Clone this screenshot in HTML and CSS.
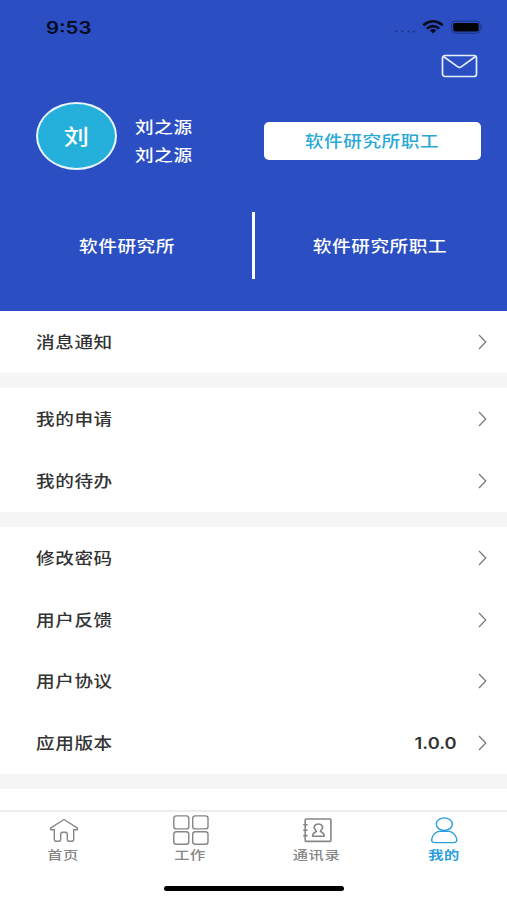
FILE: index.html
```html
<!DOCTYPE html>
<html lang="zh-CN">
<head>
<meta charset="utf-8">
<title>我的</title>
<link rel="stylesheet" href="styles.css">
</head>
<body>
<div class="screen">
  <header class="hero">
    <div class="status">
      <span class="time">9:53</span>
      <svg class="status-icons" width="92" height="20" viewBox="0 0 92 20">
        <g fill="#1b3083"><circle cx="3.5" cy="13.5" r="1"/><circle cx="9.5" cy="13.5" r="1"/><circle cx="15.5" cy="13.5" r="1"/><circle cx="21" cy="13.5" r="1"/></g>
        <g transform="translate(-2 0)"><g fill="none" stroke="#050a1c" stroke-width="2.5"><path d="M32.3 7.2Q42 -0.6 51.7 7.2"/><path d="M35.8 10.6Q42 5.6 48.2 10.6"/></g>
        <path d="M38.7 12.4Q42 9.8 45.3 12.4L42 15.4Z" fill="#050a1c"/></g>
        <g transform="translate(-2 0)"><rect x="60.7" y="3.2" width="28.5" height="12" rx="3.5" fill="none" stroke="#1c3283" stroke-width="1"/>
        <rect x="62.3" y="4.9" width="25.4" height="8.7" rx="1.8" fill="#000"/>
        <path d="M90.5 7.3q2 2 0 4z" fill="#1c3283"/></g>
      </svg>
    </div>
    <div class="mail-row">
      <svg width="37" height="24" viewBox="0 0 37 24" fill="none" stroke="#e6edff" stroke-width="1.7" stroke-linejoin="round"><rect x="1.5" y="1.5" width="34" height="21" rx="2.5"/><path d="M2.5 2.5L16.5 12.6Q18.5 14 20.5 12.6L34.5 2.5"/></svg>
    </div>
    <div class="profile">
      <div class="avatar"><span class="wide">刘</span></div>
      <div class="names"><span class="wide">刘之源</span><span class="wide">刘之源</span></div>
      <div class="role"><span class="wide">软件研究所职工</span></div>
    </div>
    <div class="orgs">
      <div class="org"><span class="wide">软件研究所</span></div>
      <div class="divider"></div>
      <div class="org"><span class="wide">软件研究所职工</span></div>
    </div>
  </header>

  <main class="menu">
    <section class="group">
      <div class="row"><span class="wide">消息通知</span><svg class="chevron" viewBox="0 0 9 16"><path d="M1 1L7.8 8L1 15"/></svg></div>
    </section>
    <section class="group">
      <div class="row"><span class="wide">我的申请</span><svg class="chevron" viewBox="0 0 9 16"><path d="M1 1L7.8 8L1 15"/></svg></div>
      <div class="row"><span class="wide">我的待办</span><svg class="chevron" viewBox="0 0 9 16"><path d="M1 1L7.8 8L1 15"/></svg></div>
    </section>
    <section class="group">
      <div class="row"><span class="wide">修改密码</span><svg class="chevron" viewBox="0 0 9 16"><path d="M1 1L7.8 8L1 15"/></svg></div>
      <div class="row"><span class="wide">用户反馈</span><svg class="chevron" viewBox="0 0 9 16"><path d="M1 1L7.8 8L1 15"/></svg></div>
      <div class="row"><span class="wide">用户协议</span><svg class="chevron" viewBox="0 0 9 16"><path d="M1 1L7.8 8L1 15"/></svg></div>
      <div class="row"><span class="wide">应用版本</span><span class="version">1.0.0</span><svg class="chevron" viewBox="0 0 9 16"><path d="M1 1L7.8 8L1 15"/></svg></div>
    </section>
    <section class="group rest"></section>
  </main>

  <nav class="tabs">
    <div class="tab">
      <svg width="40" height="34" viewBox="0 0 40 34"><path d="M21 7.5L7.5 16.2Q7 17.8 8.5 17.7H11.3V27.5Q11.3 29.3 13 29.3H16Q17.7 29.3 17.7 27.5V22.5Q17.7 20.3 19.5 20.3H22.5Q24.3 20.3 24.3 22.5V27.5Q24.3 29.3 26 29.3H29Q30.7 29.3 30.7 27.5V17.7H33.5Q35 17.8 34.5 16.2Z"/></svg>
      <span class="wide">首页</span>
    </div>
    <div class="tab">
      <svg width="40" height="34" viewBox="0 0 40 34"><rect x="3.8" y="3.9" width="15" height="13" rx="2.5"/><rect x="22.7" y="3.9" width="15.3" height="13" rx="2.5"/><rect x="3.8" y="19.8" width="15" height="12.4" rx="2.5"/><rect x="22.7" y="19.8" width="15.3" height="12.4" rx="2.5"/></svg>
      <span class="wide">工作</span>
    </div>
    <div class="tab">
      <svg width="40" height="34" viewBox="0 0 40 34"><g stroke-width="1.6"><rect x="8.2" y="7" width="25.7" height="22.4" rx="1"/><path d="M6.2 12.8h4.4M6.2 18.2h4.4M6.2 23.6h4.4M19 18.5C15.5 15.7 17.7 12 21.4 12s5.9 3.7 2.4 6.5c-.8.7-.3 1.2.5 1.5 2 .8 2.9 2 2.9 4.2H15.6c0-2.2.9-3.4 2.9-4.2.8-.3 1.3-.8.5-1.5Z"/></g></svg>
      <span class="wide">通讯录</span>
    </div>
    <div class="tab active">
      <svg width="40" height="34" viewBox="0 0 40 34"><ellipse cx="20.3" cy="12.2" rx="8" ry="6.3"/><path d="M14.8 19.4H25.2Q31.5 20.8 32.8 27.5Q33.2 30.6 29.5 30.6H11Q7.3 30.6 7.7 27.5Q9 20.8 14.8 19.4Z"/></svg>
      <span class="wide">我的</span>
    </div>
  </nav>
  <div class="home-indicator"></div>
</div>
</body>
</html>
```
FILE: styles.css
```css
* { box-sizing: border-box; }
body {
  margin: 0;
  background: #fff;
  color: #333;
  font: 500 15.5px/24px "Noto Sans CJK SC", sans-serif;
}
.screen { width: 507px; height: 900px; display: flex; flex-direction: column; overflow: hidden; }
/* Wide labels: glyphs are stretched horizontally */
.wide { display: inline-block; transform: scaleX(1.2); letter-spacing: .5px; padding-bottom: 2px; white-space: nowrap; }

.hero { height: 311px; flex: none; background: #2b4fc3; color: #fff; }
.status { height: 48px; padding: 18px 22px 0 46px; display: flex; justify-content: space-between; }
.time { font: 600 17px/20px Inter, sans-serif; color: #050a1c; transform: scaleX(1.2); transform-origin: left; }
.mail-row { height: 54px; padding: 6px 29px 0 0; display: flex; justify-content: flex-end; }
.profile { height: 68px; padding: 0 26px 0 36px; display: flex; align-items: center; }
.avatar {
  width: 81px; height: 68px;
  border: 2px solid #e8f6ff; border-radius: 50%;
  background: #25afdb;
  display: flex; align-items: center; justify-content: center;
  font-size: 21px; font-weight: 500;
}
.names { margin-left: 18px; display: flex; flex-direction: column; gap: 2px; padding-top: 9px; }
.names .wide { transform-origin: left; }
.role {
  width: 217px; height: 38px; margin-left: auto; margin-top: 9px;
  background: #fff; border-radius: 5px; color: #29a9d6;
  display: flex; align-items: center; justify-content: center;
}
.orgs { margin-top: 42px; height: 67px; display: flex; align-items: center; }
.org { flex: 1; display: flex; justify-content: center; }
.org:first-child { padding-left: 2px; }
.org:last-child { padding-right: 2px; }
.divider { width: 3px; height: 67px; background: #fff; }

.menu { height: 499px; flex: none; background: #f5f5f5; display: flex; flex-direction: column; gap: 15px; overflow: hidden; }
.group { background: #fff; flex: none; }
.row { height: 61.9px; padding: 0 20px 0 36px; display: flex; align-items: center; }
.row .wide { transform-origin: left; }
.menu .rest { flex: 1; }
.chevron { width: 9px; height: 16px; margin-left: auto; fill: none; stroke: #777; stroke-width: 1.2; }
.version { margin-left: auto; padding-top: 2px; font: 600 15.5px/24px Inter, sans-serif; transform: scaleX(1.18); transform-origin: right; }
.version + .chevron { margin-left: 21px; }

.tabs { height: 76px; flex: none; border-top: 2px solid #ededed; display: flex; }
.tab { flex: 1; display: flex; flex-direction: column; align-items: center; color: #868686; font-size: 12.5px; line-height: 18px; }
.tab svg { fill: none; stroke: currentColor; stroke-width: 1.4; stroke-linejoin: round; }
.tab .wide { transform: scaleX(1.22); }
.tab.active { color: #2b9fdc; font-weight: 700; }
.home-indicator { width: 180px; height: 5px; border-radius: 3px; background: #000; margin: 0 auto; }
```
